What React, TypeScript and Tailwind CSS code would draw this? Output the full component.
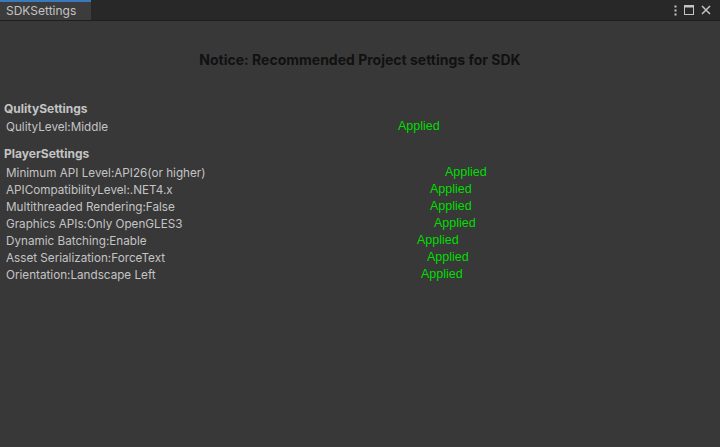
import React from 'react';

type Row = { label: string; x: number };

const quality: Row[] = [{ label: 'QulityLevel:Middle', x: 398 }];

const player: Row[] = [
  { label: 'Minimum API Level:API26(or higher)', x: 445 },
  { label: 'APICompatibilityLevel:.NET4.x', x: 430 },
  { label: 'Multithreaded Rendering:False', x: 430 },
  { label: 'Graphics APIs:Only OpenGLES3', x: 434 },
  { label: 'Dynamic Batching:Enable', x: 417 },
  { label: 'Asset Serialization:ForceText', x: 427 },
  { label: 'Orientation:Landscape Left', x: 421 },
];

function SettingRow({ row }: { row: Row }) {
  return (
    <div className="relative h-[17px] pl-[6px] text-[11.7px] leading-[17px] text-[#c4c4c4]">
      <span>{row.label}</span>
      {/* status label floats at its own x, like a GUILayout flexible space */}
      <span
        className="absolute top-[-1px] text-[12.5px] text-[#00dd00] font-['Liberation_Sans',Arial,sans-serif]"
        style={{ left: row.x }}
      >
        Applied
      </span>
    </div>
  );
}

export default function App() {
  return (
    <div className="w-[720px] h-[447px] flex flex-col bg-[#383838] font-['Inter','Noto_Sans',sans-serif] overflow-hidden">
      {/* Tab strip */}
      <div className="h-[21px] flex items-stretch bg-[#282828] border-b border-[#1f1f1f]">
        <div className="w-[91px] flex flex-col bg-[#3c3c3c]">
          <div className="h-[2px] bg-[#3a79bb]" />
          <div className="flex-1 flex items-center pl-[6px] text-[12px] text-[#c4c4c4]">SDKSettings</div>
        </div>
        <div className="flex-1" />
        <div className="flex items-center gap-[7px] pr-[9px] text-[#c4c4c4]">
          <svg width="3" height="11" viewBox="0 0 3 11">
            <rect x="0.5" y="0.5" width="2" height="2" fill="currentColor" />
            <rect x="0.5" y="4.5" width="2" height="2" fill="currentColor" />
            <rect x="0.5" y="8.5" width="2" height="2" fill="currentColor" />
          </svg>
          <svg width="10" height="10" viewBox="0 0 10 10">
            <rect x="0.5" y="0.5" width="9" height="9" fill="none" stroke="currentColor" />
            <rect x="0.5" y="0.5" width="9" height="2" fill="currentColor" />
          </svg>
          <svg width="10" height="10" viewBox="0 0 10 10">
            <path d="M1 1 L9 9 M9 1 L1 9" stroke="currentColor" strokeWidth="1.5" />
          </svg>
        </div>
      </div>

      <div className="flex-1 flex flex-col">
        <div className="pt-[30px] pb-[31px] text-center text-[14px] font-bold leading-[18px] text-[#111111]">
          Notice: Recommended Project settings for SDK
        </div>

        <div className="pl-[4px] text-[12px] font-bold leading-[17px] text-[#c4c4c4]">QulitySettings</div>
        <div className="pt-[2px]">
          {quality.map((r) => (
            <SettingRow key={r.label} row={r} />
          ))}
        </div>

        <div className="pt-[9px] pl-[4px] text-[12px] font-bold leading-[17px] text-[#c4c4c4]">PlayerSettings</div>
        <div className="pt-[3px]">
          {player.map((r) => (
            <SettingRow key={r.label} row={r} />
          ))}
        </div>
      </div>
    </div>
  );
}
